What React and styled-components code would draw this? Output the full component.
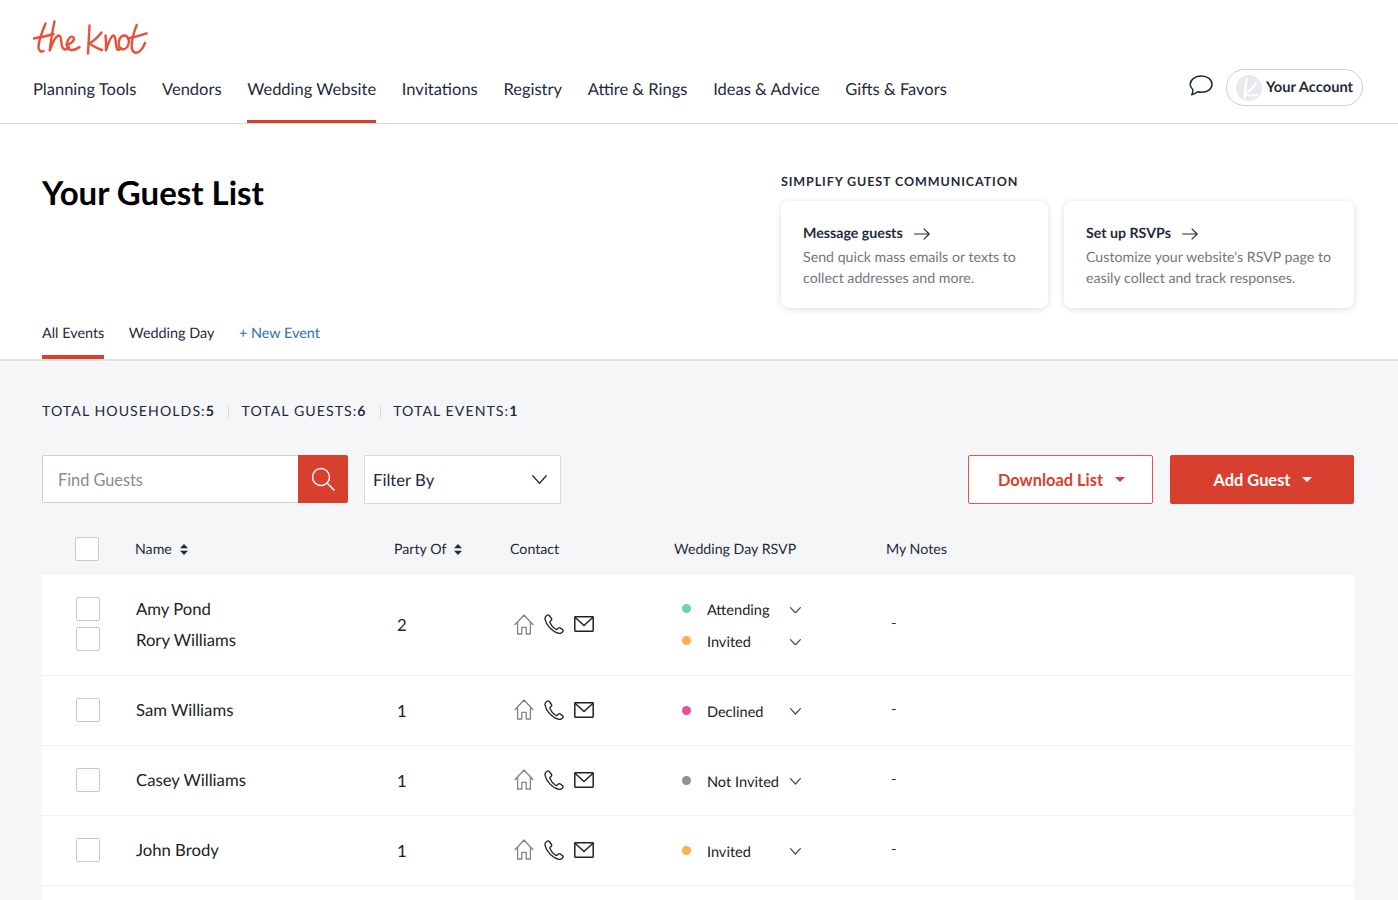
import React from 'react';
import styled, { createGlobalStyle } from 'styled-components';

const rows = [
  { people: [{ name: 'Amy Pond', status: 'Attending' }, { name: 'Rory Williams', status: 'Invited' }], party: 2 },
  { people: [{ name: 'Sam Williams', status: 'Declined' }], party: 1 },
  { people: [{ name: 'Casey Williams', status: 'Not Invited' }], party: 1 },
  { people: [{ name: 'John Brody', status: 'Invited' }], party: 1 },
];

const statusColors = {
  Attending: '#6fcfc0',
  Invited: '#ffad4d',
  Declined: '#e0509b',
  'Not Invited': '#8f8f99',
};

const navItems = ['Planning Tools', 'Vendors', 'Wedding Website', 'Invitations', 'Registry', 'Attire & Rings', 'Ideas & Advice', 'Gifts & Favors'];

const Logo = () => (
  <svg width="116" height="36" viewBox="0 0 116 36" fill="none" stroke="#e8503a" strokeWidth="2.400" strokeLinecap="round" strokeLinejoin="round">
    <path d="M0.500 18.500C7 17.500 14 16 20.500 14" />
    <path d="M12.500 3.500C9 12 6 20 5.500 26C5.300 30 7.500 32.500 10.500 31" />
    <path d="M21.500 1.500C19.500 10 18 20 16.700 30.500C19 24 22.500 15.500 26 15.500C29 16 27.500 24 29.500 27.500C31.500 30.500 34 30 36 27" />
    <path d="M33.500 25C37 24.500 41.500 21 40.800 18C39.500 14.500 34.500 18 33.800 23.500C33.200 29 38 33 46.500 27" />
    <path d="M56.500 5.500C56 15 55.500 24 55 33.500" />
    <path d="M68.500 12.500C65 17 61 21 56 23.500C60 25.500 64 28.500 69 30" />
    <path d="M72.500 15.500C73 21 73.300 25.500 73 30.500C75 24 78 15.500 80.500 15.500C83.500 16 82 25 84.300 29.500C85.500 30.500 86.500 29.500 87.500 28" />
    <path d="M91.500 15.500C87.500 15.500 85 20 85.800 25.500C87 31 93.500 30.500 95.500 24C96.800 19.500 94.500 15 91 15.500" />
    <path d="M103.700 5C100.500 13 98.500 21 98.700 27C99 32.500 103.500 34.500 107 31C109.500 28.500 111 26 112 23" />
    <path d="M95 18.500C101.500 17 107.500 15.300 113.700 13.300" />
  </svg>
);

const ChatIcon = () => (
  <svg width="24" height="22" viewBox="0 0 24 22" fill="none" stroke="#1e2b3c" strokeWidth="1.500" strokeLinejoin="round">
    <path d="M12.500 1C18.500 1 23 4.500 23 9.300C23 14.200 18.500 17.300 12.500 17.300C11 17.300 9.700 17.100 8.500 16.800C6.800 18.400 5 19.300 2.700 19.800C3.600 18.300 4 16.500 3.900 14.700C2.200 13.200 1.200 11.300 1.200 9.300C1.200 4.500 6.500 1 12.500 1Z" />
  </svg>
);

const AvatarMark = () => (
  <svg width="26" height="26" viewBox="0 0 26 26">
    <circle cx="13" cy="13" r="13" fill="#e8e9ed" />
    <path d="M11 3.500C9.500 10 8.500 16 8.500 23M8.500 18C13 16.500 17 13 20 8M9 19.500C13 21 17 21 22 19.500" fill="none" stroke="#fff" strokeWidth="2" strokeLinecap="round" />
  </svg>
);

const ArrowIcon = () => (
  <svg width="16" height="12" viewBox="0 0 16 12" fill="none" stroke="#1e2b3c" strokeWidth="1.100" strokeLinecap="round" strokeLinejoin="round">
    <path d="M0.600 6H15M10 0.800L15.200 6L10 11.200" />
  </svg>
);

const SearchIcon = () => (
  <svg width="24" height="24" viewBox="0 0 24 24" fill="none" stroke="#fff" strokeWidth="1.400" strokeLinecap="round">
    <circle cx="10" cy="10" r="8.500" />
    <path d="M16 16L23 23" />
  </svg>
);

const Chevron = ({ size = 11, color = '#3d4a5c', width = 1.200 }) => (
  <svg width={size} height={size * 0.6} viewBox="0 0 20 12" fill="none" stroke={color} strokeWidth={width * 20 / size} strokeLinecap="round" strokeLinejoin="round">
    <path d="M1 1L10 11L19 1" />
  </svg>
);

const SortIcon = () => (
  <svg width="8" height="11" viewBox="0 0 8 11" fill="#1e2b3c">
    <path d="M4 0L8 4.300H0ZM4 11L0 6.700H8Z" />
  </svg>
);

const HouseIcon = () => (
  <svg width="20" height="21" viewBox="0 0 20 21" fill="none" stroke="#858585" strokeWidth="1.300" strokeLinejoin="round">
    <path d="M0.700 11L10 1L19.300 11M3.600 8.500V20H7.800V13.300H12.200V20H16.400V8.500" />
  </svg>
);

const PhoneIcon = () => (
  <svg width="20" height="20" viewBox="0 0 20 20" fill="none" stroke="#222" strokeWidth="1.300" strokeLinejoin="round">
    <path d="M3 1.200C1.400 2.200 0.700 3.600 1 5.200C2 10.800 8.300 18 14.800 19.300C16.500 19.600 18.200 18.900 19 17.300C19.300 16.700 19.200 16.200 18.700 15.800L16 13.900C15.400 13.500 14.800 13.600 14.300 14.100L13.200 15.200C12.700 15.600 12.100 15.600 11.600 15.300C9 13.700 7 11.300 5.900 8.600C5.700 8 5.800 7.500 6.300 7.100L7.300 6.200C7.800 5.700 7.900 5.100 7.500 4.500L5.200 1.500C4.700 0.900 3.700 0.800 3 1.200Z" />
  </svg>
);

const MailIcon = () => (
  <svg width="20" height="16" viewBox="0 0 20 16" fill="none" stroke="#222" strokeWidth="1.500" strokeLinejoin="round">
    <rect x="0.800" y="0.800" width="18.400" height="14.400" rx="0.600" />
    <path d="M1 1.200L10 9.500L19 1.200" />
  </svg>
);

export default function App() {
  return (
    <>
      <GlobalStyle />
      <Header>
        <LogoLink><Logo /></LogoLink>
        <NavRow>
          <Nav>
            {navItems.map((item) => (
              <NavItem key={item} $active={item === 'Wedding Website'}>{item}</NavItem>
            ))}
          </Nav>
          <Account>
            <ChatButton><ChatIcon /></ChatButton>
            <AccountPill><AvatarMark /><span>Your Account</span></AccountPill>
          </Account>
        </NavRow>
      </Header>

      <Hero>
        <HeroTop>
          <Title>Your Guest List</Title>
          <Promo>
            <PromoHeading>SIMPLIFY GUEST COMMUNICATION</PromoHeading>
            <PromoCards>
              <PromoCard $width={267}>
                <PromoTitle>Message guests <ArrowIcon /></PromoTitle>
                <PromoText>Send quick mass emails or texts to collect addresses and more.</PromoText>
              </PromoCard>
              <PromoCard $width={290}>
                <PromoTitle>Set up RSVPs <ArrowIcon /></PromoTitle>
                <PromoText>Customize your website's RSVP page to easily collect and track responses.</PromoText>
              </PromoCard>
            </PromoCards>
          </Promo>
        </HeroTop>
        <Tabs>
          <Tab $active>All Events</Tab>
          <Tab>Wedding Day</Tab>
          <NewEvent>+ New Event</NewEvent>
        </Tabs>
      </Hero>

      <Main>
        <Stats>
          <Stat>TOTAL HOUSEHOLDS:<b>5</b></Stat>
          <Stat>TOTAL GUESTS:<b>6</b></Stat>
          <Stat>TOTAL EVENTS:<b>1</b></Stat>
        </Stats>

        <Toolbar>
          <SearchGroup>
            <SearchInput placeholder="Find Guests" />
            <SearchButton><SearchIcon /></SearchButton>
          </SearchGroup>
          <FilterSelect>Filter By <Chevron size={15} color="#1e2b3c" width={1.300} /></FilterSelect>
          <Actions>
            <ActionButton $width={185}>Download List <Caret /></ActionButton>
            <ActionButton $width={184} $primary>Add Guest <Caret /></ActionButton>
          </Actions>
        </Toolbar>

        <HeadRow>
          <HeadCheckCell><Checkbox /></HeadCheckCell>
          <HeadCell $width={259}>Name <SortIcon /></HeadCell>
          <HeadCell $width={116}>Party Of <SortIcon /></HeadCell>
          <HeadCell $width={164}>Contact</HeadCell>
          <HeadCell $width={212}>Wedding Day RSVP</HeadCell>
          <HeadCell>My Notes</HeadCell>
        </HeadRow>

        <Table>
          {rows.map((row) => (
            <Row key={row.people[0].name} $double={row.people.length > 1}>
              <Checks>
                {row.people.map((p) => <Checkbox key={p.name} />)}
              </Checks>
              <Names>
                {row.people.map((p) => <Name key={p.name}>{p.name}</Name>)}
              </Names>
              <Party>{row.party}</Party>
              <Contact>
                <HouseIcon />
                <PhoneIcon />
                <MailIcon />
              </Contact>
              <Rsvp>
                {row.people.map((p) => (
                  <RsvpLine key={p.name}>
                    <Dot $color={statusColors[p.status]} />
                    <RsvpLabel>{p.status}</RsvpLabel>
                    <Chevron />
                  </RsvpLine>
                ))}
              </Rsvp>
              <Notes>-</Notes>
            </Row>
          ))}
        </Table>
      </Main>
    </>
  );
}

const GlobalStyle = createGlobalStyle`
  html, body {
    margin: 0;
    padding: 0;
    height: 100%;
    overflow: hidden;
    background: #f5f6f8;
    color: #1e2b3c;
    font-family: Lato, "Liberation Sans", sans-serif;
    text-rendering: geometricPrecision;
  }
  * { box-sizing: border-box; }
`;

const Header = styled.header`
  height: 124px;
  background: #fff;
  border-bottom: 1px solid #d9d9d9;
  padding: 20px 35px 0 33px;
  display: flex;
  flex-direction: column;
`;

const LogoLink = styled.a`
  display: block;
  height: 36px;
`;

const NavRow = styled.div`
  margin-top: 14px;
  flex: 1;
  display: flex;
  justify-content: space-between;
  align-items: flex-start;
`;

const Nav = styled.nav`
  display: flex;
  gap: 25.700px;
`;

const NavItem = styled.a`
  height: 53px;
  padding-top: 9px;
  font-size: 16.500px;
  line-height: 20px;
  color: #1e2b3c;
  white-space: nowrap;
  border-bottom: 3px solid ${(p) => (p.$active ? '#d93f2e' : 'transparent')};
`;

const Account = styled.div`
  display: flex;
  align-items: center;
  gap: 13px;
  margin-top: -1px;
`;

const ChatButton = styled.span`
  display: flex;
  margin: -4px 0 0 1px;
`;

const AccountPill = styled.div`
  height: 37px;
  width: 137px;
  border: 1px solid #ccced3;
  border-radius: 19px;
  display: flex;
  align-items: center;
  gap: 4px;
  padding-left: 9px;
  font-size: 14.700px;
  font-weight: 700;
  white-space: nowrap;

  span {
    margin-top: -2px;
  }
`;

const Hero = styled.section`
  height: 237px;
  background: #fff;
  border-bottom: 2px solid #e2e2e2;
  padding: 0 44px 0 42px;
`;

const HeroTop = styled.div`
  height: 189px;
  display: flex;
  justify-content: space-between;
`;

const Title = styled.h1`
  margin: 49px 0 0;
  font-size: 33px;
  line-height: 41px;
  font-weight: 700;
  color: #000;
`;

const Promo = styled.div`
  padding-top: 50px;
`;

const PromoHeading = styled.div`
  font-size: 12.500px;
  line-height: 15px;
  font-weight: 700;
  letter-spacing: 0.900px;
`;

const PromoCards = styled.div`
  display: flex;
  gap: 16px;
  margin-top: 12px;
`;

const PromoCard = styled.div`
  width: ${(p) => p.$width}px;
  height: 107px;
  padding: 23px 14px 0 22px;
  background: #fff;
  border-radius: 8px;
  box-shadow: 0 1px 6px rgba(30, 43, 60, 0.16);
`;

const PromoTitle = styled.div`
  display: flex;
  align-items: center;
  gap: 11px;
  font-size: 14.200px;
  line-height: 20px;
  font-weight: 700;
`;

const PromoText = styled.p`
  margin: 3px 0 0;
  font-size: 14.200px;
  line-height: 21px;
  color: #76767e;
`;

const Tabs = styled.div`
  display: flex;
  gap: 24.500px;
  height: 46px;
`;

const Tab = styled.a`
  padding-top: 11px;
  font-size: 14.400px;
  line-height: 20px;
  color: #1e2b3c;
  border-bottom: ${(p) => (p.$active ? '4px solid #d93f2e' : 'none')};
`;

const NewEvent = styled(Tab)`
  color: #2f6fb0;
`;

const Main = styled.main`
  padding: 0 44px 0 42px;
`;

const Stats = styled.div`
  display: flex;
  height: 14px;
  margin-top: 44px;
`;

const Stat = styled.div`
  font-size: 14.150px;
  line-height: 14px;
  letter-spacing: 1.050px;
  padding: 0 13px 0 12.500px;
  border-left: 1px solid #d9dade;

  &:first-child {
    padding-left: 0;
    border-left: none;
  }
`;

const Toolbar = styled.div`
  display: flex;
  margin-top: 36px;
  gap: 16px;
`;

const SearchGroup = styled.div`
  display: flex;
  width: 306px;
  height: 48px;
`;

const SearchInput = styled.input`
  width: 257px;
  height: 48px;
  padding: 0 15px;
  border: 1px solid #cfd0d6;
  border-right: none;
  border-radius: 2px 0 0 2px;
  background: #fff;
  font: 400 16.300px Lato, sans-serif;
  outline: none;

  &::placeholder {
    color: #8a8a90;
    opacity: 1;
  }
`;

const SearchButton = styled.button`
  width: 50px;
  height: 48px;
  padding: 0;
  display: flex;
  align-items: center;
  justify-content: center;
  background: #d93f2e;
  border: none;
  border-radius: 0 2px 2px 0;
`;

const FilterSelect = styled.div`
  width: 197px;
  height: 49px;
  padding: 0 13px 0 8px;
  display: flex;
  align-items: center;
  justify-content: space-between;
  background: #fff;
  border: 1px solid #d9dade;
  font-size: 16.700px;
`;

const Actions = styled.div`
  margin-left: auto;
  display: flex;
  gap: 17px;
`;

const ActionButton = styled.button`
  width: ${(p) => p.$width}px;
  height: 49px;
  padding: 0 0 0 2px;
  display: flex;
  align-items: center;
  justify-content: center;
  gap: 12px;
  font: 700 16.400px Lato, sans-serif;
  border-radius: 2px;
  border: 1px solid ${(p) => (p.$primary ? '#d93f2e' : '#e8564a')};
  background: ${(p) => (p.$primary ? '#d93f2e' : '#fff')};
  color: ${(p) => (p.$primary ? '#fff' : '#d93f2e')};
`;

const Caret = styled.i`
  width: 0;
  height: 0;
  border-left: 5px solid transparent;
  border-right: 5px solid transparent;
  border-top: 5px solid currentColor;
`;

const HeadRow = styled.div`
  display: flex;
  align-items: center;
  height: 71px;
  padding-top: 19px;
  font-size: 14.200px;
`;

const HeadCheckCell = styled.div`
  width: 93px;
  padding-left: 33px;
  margin-top: -1px;
  display: flex;
`;

const HeadCell = styled.div`
  ${(p) => p.$width && `width: ${p.$width}px;`}
  display: flex;
  align-items: center;
  gap: 8px;
`;

const Checkbox = styled.span`
  display: block;
  width: 24px;
  height: 24px;
  background: #fff;
  border: 1px solid #c9cad0;
  border-radius: 2px;
`;

const Table = styled.div`
  background: #fff;
  padding-bottom: 14px;
`;

const Row = styled.div`
  height: ${(p) => (p.$double ? 101 : 70)}px;
  display: flex;
  align-items: center;
  border-bottom: 1px solid #f1f1f3;
`;

const Checks = styled.div`
  width: 94px;
  padding-left: 34px;
  margin-top: -2px;
  display: flex;
  flex-direction: column;
  gap: 6px;
`;

const Names = styled.div`
  width: 261px;
  margin-top: -1px;
  display: flex;
  flex-direction: column;
  gap: 10px;
`;

const Name = styled.div`
  font-size: 16.700px;
  line-height: 21px;
  color: #222;
`;

const Party = styled.div`
  width: 117px;
  font-size: 16.700px;
  color: #222;
`;

const Contact = styled.div`
  width: 165px;
  margin-top: -2px;
  display: flex;
  align-items: center;
  gap: 10px;
`;

const Rsvp = styled.div`
  width: 212px;
  margin-top: 2px;
  display: flex;
  flex-direction: column;
  gap: 11px;
`;

const RsvpLine = styled.div`
  width: 122px;
  padding-left: 3px;
  display: flex;
  align-items: center;
  height: 21px;
`;

const Dot = styled.span`
  width: 9px;
  height: 9px;
  border-radius: 50%;
  background: ${(p) => p.$color};
  margin-top: -3px;
`;

const RsvpLabel = styled.span`
  width: 84px;
  margin-left: 16px;
  font-size: 14.600px;
  color: #222;
  white-space: nowrap;
  padding-top: 1px;
`;

const Notes = styled.div`
  font-size: 15px;
  margin-top: -4px;
`;
